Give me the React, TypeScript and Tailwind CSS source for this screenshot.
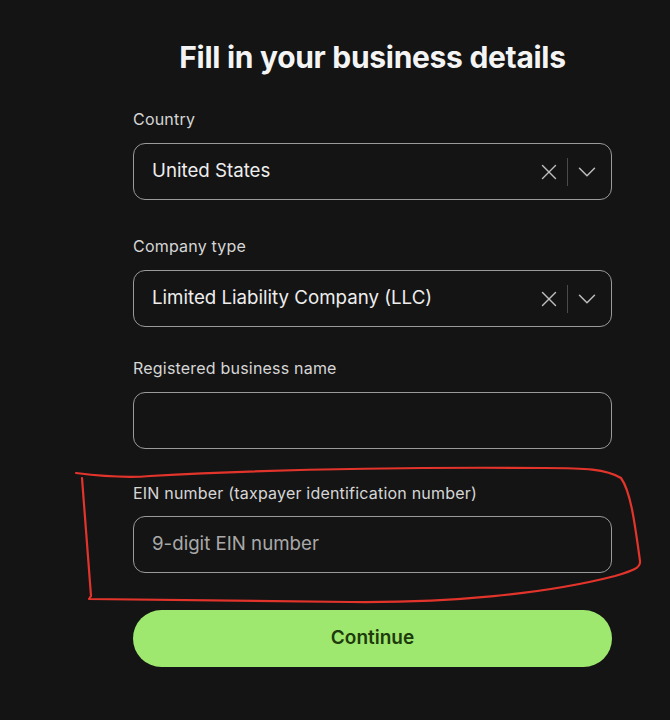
import { X, ChevronDown } from "lucide-react";

function SelectField({ label, value, labelClass }: { label: string; value: string; labelClass: string }) {
  return (
    <div>
      <label className={`block text-[16px] leading-5 tracking-[0.2px] text-[#d6d6d6] ${labelClass}`}>{label}</label>
      <div className="mt-[14px] flex h-[57px] items-center rounded-[12px] border border-[#9a9a9a] pl-[18px] pr-[9px]">
        <span className="flex-1 text-[18.7px] text-[#eeeeee]">{value}</span>
        <X className="h-[26px] w-[26px] text-[#bdbdbd]" strokeWidth={1.3} />
        <div className="ml-[5px] mr-[4px] h-[28px] w-px bg-[#4a4a4a]" />
        <ChevronDown className="h-[30px] w-[30px] text-[#bdbdbd]" strokeWidth={1.2} />
      </div>
    </div>
  );
}

export default function App() {
  return (
    <div
      className="relative min-h-[720px] w-full overflow-hidden bg-[#141414]"
      style={{ fontFamily: "Inter, 'Noto Sans', sans-serif" }}
    >
      <div className="ml-[133px] w-[479px] pt-[39px]">
        <h1 className="text-center text-[30px] font-bold leading-[36px] tracking-[-0.3px] text-[#f4f4f4]">
          Fill in your business details
        </h1>

        <SelectField label="Country" value="United States" labelClass="mt-[34px]" />
        <SelectField label="Company type" value="Limited Liability Company (LLC)" labelClass="mt-[36px]" />

        {/* business name */}
        <label className="mt-[31px] block text-[16px] leading-5 tracking-[0.2px] text-[#d6d6d6]">
          Registered business name
        </label>
        <div className="mt-[14px] h-[57px] rounded-[12px] border border-[#9a9a9a]" />

        {/* EIN */}
        <label className="mt-[34px] block text-[16px] leading-5 tracking-[0.2px] text-[#d6d6d6]">
          EIN number (taxpayer identification number)
        </label>
        <div className="mt-[13px] flex h-[57px] items-center rounded-[12px] border border-[#9a9a9a] pl-[18px]">
          <span className="text-[18.7px] text-[#a9a9a9]">9-digit EIN number</span>
        </div>

        <button className="mt-[37px] flex h-[57px] w-full items-center justify-center rounded-full bg-[#9fe870] text-[19px] font-semibold text-[#1d3b0c]">
          Continue
        </button>
      </div>

      {/* red hand-drawn annotation */}
      <svg className="pointer-events-none absolute left-0 top-0" width="670" height="720" viewBox="0 0 670 720">
        <path
          d="M76 473 C 100 476, 128 478, 150 476 C 260 470, 410 467, 545 468 C 585 468, 606 469, 621 478 C 631 492, 635 525, 640 561 C 641 568, 632 571, 615 576 C 545 594, 450 603, 350 602 C 250 601, 150 600, 89 599 L 91 596 C 88 560, 85 520, 82 478"
          fill="none"
          stroke="#e3342c"
          strokeWidth="2.2"
          strokeLinecap="round"
          strokeLinejoin="round"
        />
      </svg>
    </div>
  );
}
